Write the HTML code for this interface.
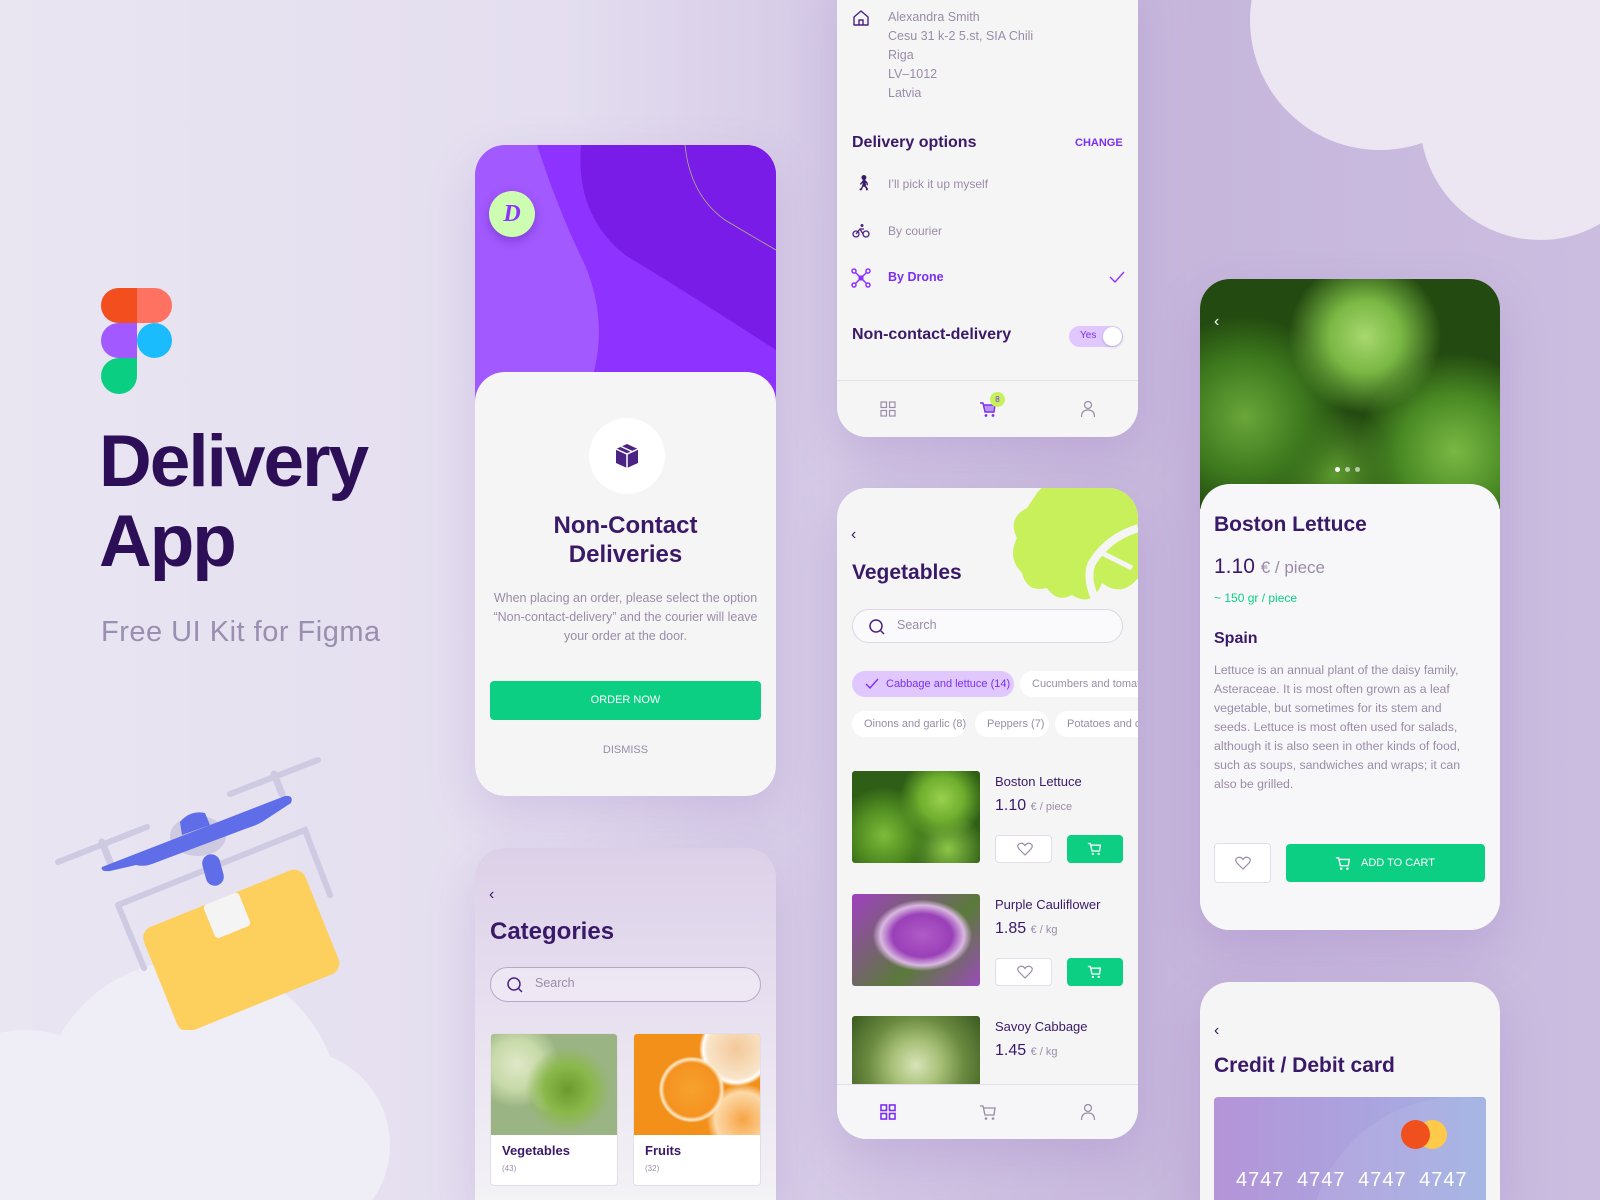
<!DOCTYPE html>
<html><head><meta charset="utf-8"><style>
*{margin:0;padding:0;box-sizing:border-box}
html{width:1600px;height:1200px;overflow:hidden}
body{width:1600px;height:1200px;overflow:hidden;position:relative;font-family:"Liberation Sans",sans-serif;background:linear-gradient(90deg,#e9e5f1 0%,#e4def0 35%,#d2c6e4 55%,#c6b6dc 75%,#cbbde0 100%)}
.a{position:absolute}
.card{position:absolute;background:#f5f5f6;border-radius:30px;overflow:hidden;box-shadow:0 20px 50px rgba(120,80,170,.18)}
.cut{border-radius:30px 30px 0 0}
.t{position:absolute;white-space:nowrap}
.dk{color:#3a1a68;font-weight:bold}
.gr{color:#9a8ca8}
.btn{position:absolute;border-radius:4px}
.grn{background:#0ccf84}
.wb{background:#fff;border:1px solid #e2dde8}
.chip{position:absolute;height:26px;border-radius:13px;background:#fff;font-size:11px;color:#9a8ca8;line-height:26px;padding-left:12px;white-space:nowrap;overflow:hidden}
</style></head><body>
<div class="a" style="left:0;top:0;width:1600px;height:1200px;overflow:hidden">
<!-- clouds -->
<div class="a" style="left:1250px;top:-110px;width:260px;height:260px;border-radius:50%;background:#ebe6f2"></div>
<div class="a" style="left:1420px;top:0px;width:240px;height:240px;border-radius:50%;background:#ebe6f2"></div>
<div class="a" style="left:1330px;top:-60px;width:300px;height:200px;background:#ebe6f2"></div>
<div class="a" style="left:40px;top:960px;width:300px;height:300px;border-radius:50%;background:#efedf5"></div>
<div class="a" style="left:200px;top:1050px;width:190px;height:190px;border-radius:50%;background:#efedf5"></div>
<div class="a" style="left:-90px;top:1030px;width:230px;height:230px;border-radius:50%;background:#efedf5"></div>

<!-- figma logo -->
<div class="a" style="left:101px;top:288px;width:36px;height:35px;background:#f24e1e;border-radius:18px 0 0 18px"></div>
<div class="a" style="left:137px;top:288px;width:35px;height:35px;background:#ff7262;border-radius:0 18px 18px 0"></div>
<div class="a" style="left:101px;top:323px;width:36px;height:35px;background:#a259ff;border-radius:18px 0 0 18px"></div>
<div class="a" style="left:137px;top:323px;width:35px;height:35px;background:#1abcfe;border-radius:50%"></div>
<div class="a" style="left:101px;top:358px;width:36px;height:36px;background:#0acf83;border-radius:18px 0 18px 18px"></div>
<div class="t" style="left:99px;top:422px;font-size:73px;line-height:80px;font-weight:bold;color:#2d0f57;letter-spacing:-2px">Delivery<br>App</div>
<div class="t" style="left:101px;top:616px;font-size:29px;color:#9a8fb0;letter-spacing:0.5px">Free UI Kit for Figma</div>

<!-- drone -->
<svg class="a" style="left:40px;top:740px" width="360" height="290" viewBox="0 0 360 290">
<g stroke="#cdcae2" stroke-linecap="round" fill="none">
<line x1="18" y1="122" x2="107" y2="87" stroke-width="6"/>
<line x1="190" y1="54" x2="278" y2="20" stroke-width="6"/>
<line x1="62" y1="102" x2="70" y2="122" stroke-width="7"/>
<line x1="234" y1="34" x2="242" y2="54" stroke-width="7"/>
<polyline points="78,165 265,90 290,155" stroke-width="6"/>
<polyline points="78,165 104,228" stroke-width="6"/>
</g>
<ellipse cx="158" cy="96" rx="28" ry="20" fill="#cdcae2"/>
<path d="M140,82 Q150,70 165,73 L170,85 L142,95 Z" fill="#5f6ee8"/>
<path d="M62,127 L245,56 Q254,55 251,63 L222,82 Q215,86 205,89 L112,124 Q104,127 96,125 L70,131 Q60,132 62,127 Z" fill="#5f6ee8"/>
<rect x="164" y="114" width="18" height="32" rx="9" fill="#5f6ee8" transform="rotate(-15 173 130)"/>
<g transform="rotate(-22 199 205)">
<rect x="112" y="155" width="174" height="112" rx="12" fill="#fdd05e"/>
<rect x="180" y="155" width="38" height="36" rx="4" fill="#f4f4f4"/>
</g>
</svg>

<!-- Phone 1 -->
<div class="card" style="left:475px;top:145px;width:301px;height:651px;background:#a259ff">
<svg class="a" style="left:0;top:0" width="301" height="260" viewBox="0 0 301 260">
<path d="M62,0 Q85,70 110,120 Q135,180 115,240 L110,260 L301,260 L301,0 Z" fill="#8e33ff"/>
<path d="M106,0 Q100,70 150,110 Q200,140 301,205 L301,0 Z" fill="#7a1ce8"/>
<path d="M210,0 Q215,50 250,75 Q275,90 301,105" stroke="#c8f05a" stroke-width="0.8" fill="none" opacity=".7"/>
</svg>
<div class="a" style="left:14px;top:46px;width:46px;height:46px;border-radius:50%;background:#cdfdb0;box-shadow:0 4px 10px rgba(60,0,120,.3);text-align:center;line-height:46px;font-size:24px;font-style:italic;font-family:'Liberation Serif',serif;color:#8e33ff;font-weight:bold">D</div>
<div class="a" style="left:0;top:227px;width:301px;height:424px;background:#f5f5f6;border-radius:30px 30px 0 0"></div>
<div class="a" style="left:114px;top:273px;width:76px;height:76px;border-radius:50%;background:#fff"></div>
<svg class="a" style="left:138px;top:297px" width="28" height="28" viewBox="0 0 28 28"><path d="M14,2 L25,7 L25,21 L14,26 L3,21 L3,7 Z" fill="#4a2384"/><path d="M3,7 L14,12 L25,7 M14,12 L14,26 M8,4.5 L19,9.5" stroke="#fff" stroke-width="1.5" fill="none"/></svg>
<div class="t dk" style="left:0;width:301px;text-align:center;top:366px;font-size:24px;line-height:29px">Non-Contact<br>Deliveries</div>
<div class="t gr" style="left:0;width:301px;text-align:center;top:444px;font-size:12.5px;line-height:19px">When placing an order, please select the option<br>“Non-contact-delivery” and the courier will leave<br>your order at the door.</div>
<div class="btn grn" style="left:15px;top:536px;width:271px;height:39px;color:#fff;font-size:11px;text-align:center;line-height:39px">ORDER NOW</div>
<div class="t gr" style="left:0;width:301px;text-align:center;top:599px;font-size:11px">DISMISS</div>
</div>

<!-- Phone 2 categories -->
<div class="card cut" style="left:475px;top:848px;width:301px;height:352px;background:linear-gradient(180deg,#dcd0e8 0%,#e6deef 40%,#f3f2f5 100%)">
<div class="t" style="left:14px;top:38px;font-size:16px;color:#3a1a68">‹</div>
<div class="t dk" style="left:15px;top:70px;font-size:24px">Categories</div>
<div class="a" style="left:15px;top:119px;width:271px;height:35px;border:1px solid #b7a8c8;border-radius:18px;background:rgba(255,255,255,.3)"></div>
<svg class="a" style="left:31px;top:128px" width="18" height="18" viewBox="0 0 18 18"><circle cx="8" cy="8" r="6" stroke="#4a2384" stroke-width="1.5" fill="none"/><line x1="12.5" y1="12.5" x2="16" y2="16" stroke="#4a2384" stroke-width="1.5"/></svg>
<div class="t gr" style="left:60px;top:128px;font-size:12.5px">Search</div>
<div class="a" style="left:15px;top:185px;width:128px;height:153px;border-radius:4px;background:#fff;overflow:hidden;border:1px solid #e2dde8">
<div class="a" style="left:0;top:0;width:128px;height:101px;background:radial-gradient(circle at 60% 55%,#6d9a2e 0,#8ab84a 25%,transparent 45%),radial-gradient(circle at 20% 30%,#dfe8c8 0,#c7d9a8 20%,transparent 35%),radial-gradient(circle at 45% 60%,#e8efd9 0,transparent 20%),#9bb483"></div>
<div class="t dk" style="left:11px;top:109px;font-size:13px">Vegetables</div>
<div class="t gr" style="left:11px;top:130px;font-size:8px">(43)</div></div>
<div class="a" style="left:158px;top:185px;width:128px;height:153px;border-radius:4px;background:#fff;overflow:hidden;border:1px solid #e2dde8">
<div class="a" style="left:0;top:0;width:128px;height:101px;background:radial-gradient(circle at 45% 55%,#f7a22d 0,#f59220 30%,#fde9c8 34%,transparent 37%),radial-gradient(circle at 80% 15%,#f3c89a 0,#f9e4c8 22%,#fff 25%,transparent 28%),radial-gradient(circle at 85% 85%,#f7a444 0,#fcd9a8 20%,transparent 26%),#f29019"></div>
<div class="t dk" style="left:11px;top:109px;font-size:13px">Fruits</div>
<div class="t gr" style="left:11px;top:130px;font-size:8px">(32)</div></div>
</div>

<!-- Phone 3 delivery -->
<div class="card" style="left:837px;top:-40px;width:301px;height:477px">
<svg class="a" style="left:14px;top:48px" width="20" height="20" viewBox="0 0 20 20"><path d="M3,9 L10,3 L17,9 L17,17 L3,17 Z M8,17 L8,12 L12,12 L12,17" stroke="#4a2384" stroke-width="1.4" fill="none" stroke-linejoin="round"/></svg>
<div class="t gr" style="left:51px;top:48px;font-size:12.5px;line-height:19px">Alexandra Smith<br>Cesu 31 k-2 5.st, SIA Chili<br>Riga<br>LV–1012<br>Latvia</div>
<div class="t dk" style="left:15px;top:174px;font-size:16px">Delivery options</div>
<div class="t" style="left:238px;top:177px;font-size:11px;color:#7b2ff0;font-weight:bold">CHANGE</div>
<div class="t" style="left:17px;top:214px;font-size:15px;color:#3a1a68">🚶︎</div>
<div class="t gr" style="left:51px;top:217px;font-size:12px">I’ll pick it up myself</div>
<svg class="a" style="left:15px;top:263px" width="18" height="16" viewBox="0 0 18 16"><circle cx="4" cy="11" r="3" stroke="#4a2384" fill="none" stroke-width="1.3"/><circle cx="14" cy="11" r="3" stroke="#4a2384" fill="none" stroke-width="1.3"/><path d="M4,11 L8,6 L11,11 M8,6 L12,6" stroke="#4a2384" fill="none" stroke-width="1.3"/><circle cx="10" cy="2.5" r="1.5" fill="#4a2384"/></svg>
<div class="t gr" style="left:51px;top:264px;font-size:12px">By courier</div>
<svg class="a" style="left:14px;top:308px" width="20" height="20" viewBox="0 0 20 20"><g stroke="#8e33ff" stroke-width="1.5" fill="none"><path d="M4,4 L16,16 M16,4 L4,16"/><circle cx="3" cy="3" r="2"/><circle cx="17" cy="3" r="2"/><circle cx="3" cy="17" r="2"/><circle cx="17" cy="17" r="2"/></g><rect x="7.5" y="7.5" width="5" height="5" fill="#8e33ff"/></svg>
<div class="t" style="left:51px;top:310px;font-size:12.5px;color:#7b2ff0;font-weight:bold">By Drone</div>
<svg class="a" style="left:272px;top:310px" width="16" height="14" viewBox="0 0 16 14"><path d="M1,7 L6,12 L15,2" stroke="#8e33ff" stroke-width="1.4" fill="none"/></svg>
<div class="t dk" style="left:15px;top:366px;font-size:16px">Non-contact-delivery</div>
<div class="a" style="left:232px;top:366px;width:54px;height:21px;border-radius:11px;background:#e0c8ff"></div>
<div class="t" style="left:243px;top:370px;font-size:10px;color:#7b2ff0">Yes</div>
<div class="a" style="left:266px;top:367px;width:19px;height:19px;border-radius:50%;background:#fff;box-shadow:0 1px 3px rgba(0,0,0,.2)"></div>
<div class="a" style="left:0;top:420px;width:301px;height:1px;background:#e4e0ea"></div>
<svg class="a" style="left:43px;top:441px" width="16" height="16" viewBox="0 0 16 16"><g stroke="#9a8ca8" fill="none" stroke-width="1.2"><rect x="1" y="1" width="5.5" height="5.5"/><rect x="9.5" y="1" width="5.5" height="5.5"/><rect x="1" y="9.5" width="5.5" height="5.5"/><rect x="9.5" y="9.5" width="5.5" height="5.5"/></g></svg>
<svg class="a" style="left:142px;top:440px" width="18" height="18" viewBox="0 0 18 18"><path d="M1,3 L4,3 L6,12 L15,12 L16,5 L5,5" fill="#b894ef" stroke="#7b2ff0" stroke-width="1.4"/><circle cx="7" cy="15.5" r="1.4" fill="#7b2ff0"/><circle cx="14" cy="15.5" r="1.4" fill="#7b2ff0"/></svg>
<div class="a" style="left:153px;top:432px;width:15px;height:15px;border-radius:50%;background:#c8f05a;font-size:8px;text-align:center;line-height:15px;color:#7b2ff0">8</div>
<svg class="a" style="left:243px;top:440px" width="16" height="18" viewBox="0 0 16 18"><circle cx="8" cy="5" r="3.5" stroke="#9a8ca8" fill="none" stroke-width="1.2"/><path d="M1.5,17 Q1.5,10 8,10 Q14.5,10 14.5,17" stroke="#9a8ca8" fill="none" stroke-width="1.2"/></svg>
</div>

<!-- Phone 4 vegetables -->
<div class="card" style="left:837px;top:488px;width:301px;height:651px">
<svg class="a" style="left:170px;top:-5px" width="135" height="130" viewBox="0 0 135 130"><path d="M30,10 Q45,-10 80,5 Q110,-5 131,20 L131,95 Q115,115 95,100 Q85,125 65,112 Q50,120 40,105 Q20,110 15,90 Q0,75 10,55 Q0,35 20,25 Z" fill="#c8f05a"/><path d="M131,45 Q100,55 85,80 Q78,95 90,120" stroke="#f5f5f6" stroke-width="8" fill="none"/><path d="M95,70 L125,85" stroke="#f5f5f6" stroke-width="5"/></svg>
<div class="t" style="left:14px;top:38px;font-size:16px;color:#3a1a68">‹</div>
<div class="t dk" style="left:15px;top:73px;font-size:21px">Vegetables</div>
<div class="a" style="left:15px;top:121px;width:271px;height:34px;border:1px solid #dcd6e4;border-radius:17px;background:#fafafc"></div>
<svg class="a" style="left:31px;top:130px" width="18" height="18" viewBox="0 0 18 18"><circle cx="8" cy="8" r="6" stroke="#4a2384" stroke-width="1.5" fill="none"/><line x1="12.5" y1="12.5" x2="16" y2="16" stroke="#4a2384" stroke-width="1.5"/></svg>
<div class="t gr" style="left:60px;top:130px;font-size:12.5px">Search</div>
<div class="chip" style="left:15px;top:183px;width:162px;background:#e0c8ff;color:#7b2ff0;padding-left:34px">Cabbage and lettuce (14)</div>
<svg class="a" style="left:28px;top:190px" width="14" height="12" viewBox="0 0 14 12"><path d="M1,6 L5,10 L13,1" stroke="#7b2ff0" stroke-width="1.4" fill="none"/></svg>
<div class="chip" style="left:183px;top:183px;width:130px">Cucumbers and tomato</div>
<div class="chip" style="left:15px;top:223px;width:114px">Oinons and garlic (8)</div>
<div class="chip" style="left:138px;top:223px;width:74px">Peppers (7)</div>
<div class="chip" style="left:218px;top:223px;width:100px">Potatoes and ca</div>
<div class="a" style="left:15px;top:283px;width:128px;height:92px;border-radius:3px;background:radial-gradient(circle at 70% 30%,#9ad04e 0,#6fae2e 20%,transparent 38%),radial-gradient(circle at 25% 70%,#7cbc3a 0,#4e8a20 25%,transparent 42%),radial-gradient(circle at 75% 85%,#8cc648 0,transparent 30%),#2f5e16"></div>
<div class="t dk" style="left:158px;top:286px;font-size:13px;font-weight:normal;color:#3a1a68">Boston Lettuce</div>
<div class="t" style="left:158px;top:309px;font-size:16px;color:#3a1a68">1.10 <span style="font-size:11px;color:#9a8ca8">€ / piece</span></div>
<div class="btn wb" style="left:158px;top:347px;width:57px;height:28px"></div>
<div class="btn grn" style="left:230px;top:347px;width:56px;height:28px"></div>
<div class="a" style="left:15px;top:406px;width:128px;height:92px;border-radius:3px;background:radial-gradient(ellipse at 55% 45%,#b05ac8 0,#9a40b8 30%,#d8b8e0 42%,transparent 50%),linear-gradient(135deg,#a040c0,#5a7a3a 60%,#9a4cb8)"></div>
<div class="t" style="left:158px;top:409px;font-size:13px;color:#3a1a68">Purple Cauliflower</div>
<div class="t" style="left:158px;top:432px;font-size:16px;color:#3a1a68">1.85 <span style="font-size:11px;color:#9a8ca8">€ / kg</span></div>
<div class="btn wb" style="left:158px;top:470px;width:57px;height:28px"></div>
<div class="btn grn" style="left:230px;top:470px;width:56px;height:28px"></div>
<div class="a" style="left:15px;top:528px;width:128px;height:70px;border-radius:3px;background:radial-gradient(circle at 50% 70%,#d8e4b8 0,#a8c078 30%,#6a8a40 60%,#3a5a20 100%)"></div>
<div class="t" style="left:158px;top:531px;font-size:13px;color:#3a1a68">Savoy Cabbage</div>
<div class="t" style="left:158px;top:554px;font-size:16px;color:#3a1a68">1.45 <span style="font-size:11px;color:#9a8ca8">€ / kg</span></div>
<div class="a" style="left:0;top:596px;width:301px;height:55px;background:#f6f5f8;border-top:1px solid #e2dde8"></div>
<svg class="a" style="left:43px;top:616px" width="16" height="16" viewBox="0 0 16 16"><g stroke="#7b2ff0" fill="none" stroke-width="1.6"><rect x="1" y="1" width="5.5" height="5.5"/><rect x="9.5" y="1" width="5.5" height="5.5"/><rect x="1" y="9.5" width="5.5" height="5.5"/><rect x="9.5" y="9.5" width="5.5" height="5.5"/></g></svg>
<svg class="a" style="left:142px;top:615px" width="18" height="18" viewBox="0 0 18 18"><path d="M1,3 L4,3 L6,12 L15,12 L16,5 L5,5" fill="none" stroke="#9a8ca8" stroke-width="1.3"/><circle cx="7" cy="15.5" r="1.3" fill="#9a8ca8"/><circle cx="14" cy="15.5" r="1.3" fill="#9a8ca8"/></svg>
<svg class="a" style="left:243px;top:615px" width="16" height="18" viewBox="0 0 16 18"><circle cx="8" cy="5" r="3.5" stroke="#9a8ca8" fill="none" stroke-width="1.2"/><path d="M1.5,17 Q1.5,10 8,10 Q14.5,10 14.5,17" stroke="#9a8ca8" fill="none" stroke-width="1.2"/></svg>
</div>

<!-- Phone 5 lettuce -->
<div class="card" style="left:1200px;top:279px;width:300px;height:651px">
<div class="a" style="left:0;top:0;width:300px;height:230px;background:radial-gradient(circle at 55% 25%,#a8d870 0,#7ab844 15%,transparent 32%),radial-gradient(circle at 15% 60%,#6aa63a 0,#3e7a1e 20%,transparent 35%),radial-gradient(circle at 85% 75%,#7ab844 0,#4a8a24 18%,transparent 32%),radial-gradient(circle at 45% 85%,#5c9a2e 0,transparent 25%),#234a10"></div>
<div class="t" style="left:14px;top:34px;font-size:16px;color:#fff">‹</div>
<div class="a" style="left:135px;top:188px;width:5px;height:5px;border-radius:50%;background:#fff"></div>
<div class="a" style="left:145px;top:188px;width:5px;height:5px;border-radius:50%;background:rgba(255,255,255,.6)"></div>
<div class="a" style="left:155px;top:188px;width:5px;height:5px;border-radius:50%;background:rgba(255,255,255,.6)"></div>
<div class="a" style="left:0;top:205px;width:300px;height:446px;background:#f7f7f9;border-radius:30px 30px 0 0"></div>
<div class="t dk" style="left:14px;top:234px;font-size:21px">Boston Lettuce</div>
<div class="t" style="left:14px;top:276px;font-size:21px;color:#3a1a68">1.10 <span style="font-size:17px;color:#9a8ca8">€ / piece</span></div>
<div class="t" style="left:14px;top:312px;font-size:12px;color:#0ccf84">~ 150 gr / piece</div>
<div class="t dk" style="left:14px;top:351px;font-size:16px">Spain</div>
<div class="t gr" style="left:14px;top:382px;font-size:12.3px;line-height:19px">Lettuce is an annual plant of the daisy family,<br>Asteraceae. It is most often grown as a leaf<br>vegetable, but sometimes for its stem and<br>seeds. Lettuce is most often used for salads,<br>although it is also seen in other kinds of food,<br>such as soups, sandwiches and wraps; it can<br>also be grilled.</div>
<div class="btn wb" style="left:14px;top:564px;width:57px;height:40px"></div>
<svg class="a" style="left:35px;top:577px" width="16" height="14" viewBox="0 0 16 14"><path d="M8,13 L2,7 Q-1,3 3,1.5 Q6,0.5 8,3.5 Q10,0.5 13,1.5 Q17,3 14,7 Z" stroke="#9a8ca8" fill="none" stroke-width="1.2"/></svg>
<div class="btn grn" style="left:86px;top:565px;width:199px;height:38px;color:#fff;font-size:11px;line-height:38px;padding-left:75px">ADD TO CART</div>
<svg class="a" style="left:135px;top:576px" width="16" height="16" viewBox="0 0 18 18"><path d="M1,3 L4,3 L6,12 L15,12 L16,5 L5,5" fill="none" stroke="#fff" stroke-width="1.5"/><circle cx="7" cy="15.5" r="1.4" fill="#fff"/><circle cx="14" cy="15.5" r="1.4" fill="#fff"/></svg>
</div>

<svg class="a" style="left:1017px;top:842px" width="16" height="14" viewBox="0 0 16 14"><path d="M8,13 L2,7 Q-1,3 3,1.5 Q6,0.5 8,3.5 Q10,0.5 13,1.5 Q17,3 14,7 Z" stroke="#9a8ca8" fill="none" stroke-width="1.2"/></svg>
<svg class="a" style="left:1087px;top:841px" width="15" height="15" viewBox="0 0 18 18"><path d="M1,3 L4,3 L6,12 L15,12 L16,5 L5,5" fill="none" stroke="#fff" stroke-width="1.6"/><circle cx="7" cy="15.5" r="1.4" fill="#fff"/><circle cx="14" cy="15.5" r="1.4" fill="#fff"/></svg>
<svg class="a" style="left:1017px;top:965px" width="16" height="14" viewBox="0 0 16 14"><path d="M8,13 L2,7 Q-1,3 3,1.5 Q6,0.5 8,3.5 Q10,0.5 13,1.5 Q17,3 14,7 Z" stroke="#9a8ca8" fill="none" stroke-width="1.2"/></svg>
<svg class="a" style="left:1087px;top:964px" width="15" height="15" viewBox="0 0 18 18"><path d="M1,3 L4,3 L6,12 L15,12 L16,5 L5,5" fill="none" stroke="#fff" stroke-width="1.6"/><circle cx="7" cy="15.5" r="1.4" fill="#fff"/><circle cx="14" cy="15.5" r="1.4" fill="#fff"/></svg>

<!-- Phone 6 credit -->
<div class="card cut" style="left:1200px;top:982px;width:300px;height:218px">
<div class="t" style="left:14px;top:40px;font-size:16px;color:#3a1a68">‹</div>
<div class="t dk" style="left:14px;top:72px;font-size:21px">Credit / Debit card</div>
<div class="a" style="left:14px;top:115px;width:272px;height:140px;border-radius:4px;overflow:hidden;background:linear-gradient(90deg,#b494d8,#a8a8e0 70%,#9eb0e2)">
<div class="a" style="left:95px;top:0;width:300px;height:300px;border-radius:50%;background:rgba(255,255,255,.08)"></div>
<div class="a" style="left:204px;top:23px;width:29px;height:29px;border-radius:50%;background:#ffc94a"></div>
<div class="a" style="left:187px;top:23px;width:29px;height:29px;border-radius:50%;background:#f0501e"></div>
<div class="t" style="left:22px;top:72px;font-size:20px;color:#fff;letter-spacing:1px;word-spacing:6px">4747 4747 4747 4747</div>
</div>
</div>
</div>
</body></html>
